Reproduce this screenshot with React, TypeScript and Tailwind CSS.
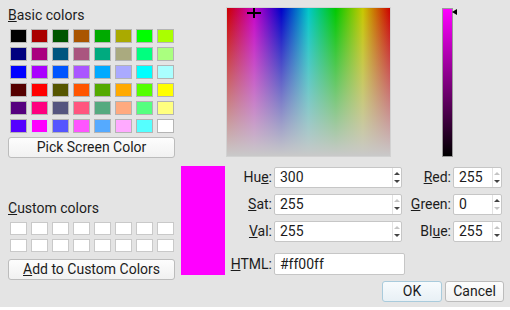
import React from "react";

const basicColors = [
  ["#000000", "#aa0000", "#005500", "#aa5500", "#00aa00", "#aaaa00", "#00ff00", "#aaff00"],
  ["#00007f", "#aa007f", "#00557f", "#aa557f", "#00aa7f", "#aaaa7f", "#00ff7f", "#aaff7f"],
  ["#0000ff", "#aa00ff", "#0055ff", "#aa55ff", "#00aaff", "#aaaaff", "#00ffff", "#aaffff"],
  ["#550000", "#ff0000", "#555500", "#ff5500", "#55aa00", "#ffaa00", "#55ff00", "#ffff00"],
  ["#55007f", "#ff007f", "#55557f", "#ff557f", "#55aa7f", "#ffaa7f", "#55ff7f", "#ffff7f"],
  ["#5500ff", "#ff00ff", "#5555ff", "#ff55ff", "#55aaff", "#ffaaff", "#55ffff", "#ffffff"],
];

function Arrow({ up, enabled }: { up: boolean; enabled: boolean }) {
  const color = enabled ? "border-b-[#444]" : "border-b-[#c4c4c4]";
  const colorDown = enabled ? "border-t-[#444]" : "border-t-[#c4c4c4]";
  return up ? (
    <div className={`w-0 h-0 border-x-[3px] border-x-transparent border-b-[3px] ${color}`} />
  ) : (
    <div className={`w-0 h-0 border-x-[3px] border-x-transparent border-t-[3px] ${colorDown}`} />
  );
}

function SpinBox({ value, w, up, down }: { value: string; w: string; up: boolean; down: boolean }) {
  return (
    <div className={`${w} h-[21px] flex bg-white border border-[#c6c6c6] rounded-[2px]`}>
      <div className="flex-1 pl-[5px] leading-[19px]">{value}</div>
      <div className="w-[9px] border-l border-[#e2e2e2] flex flex-col items-center justify-center gap-[5px]">
        <Arrow up enabled={up} />
        <Arrow up={false} enabled={down} />
      </div>
    </div>
  );
}

function Btn({ children, w, primary }: { children: React.ReactNode; w: string; primary?: boolean }) {
  return (
    <button
      className={`${w} h-[21px] rounded-[3px] border text-[14px] leading-[19px] ${
        primary
          ? "border-[#a9cbdc] bg-[linear-gradient(to_bottom,#f7fbfd,#e8f0f5)]"
          : "border-[#bcbcbc] bg-[linear-gradient(to_bottom,#fdfdfd,#f1f1f1)]"
      }`}
    >
      {children}
    </button>
  );
}

export default function App() {
  return (
    <div className="w-[510px] h-[307px] bg-[#e4e4e4] flex font-['Roboto','Noto_Sans',sans-serif] text-[14px] text-[#1c1c1c]">
      {/* left column */}
      <div className="w-[175px] pl-[8px] pt-[6px] flex flex-col">
        <div className="h-[18px] leading-[18px]">
          <span className="underline">B</span>asic colors
        </div>
        <div className="grid grid-cols-[repeat(8,17px)] gap-x-[4px] gap-y-[4px] mt-[5px] ml-[2px]">
          {basicColors.flat().map((c, i) => (
            <div
              key={i}
              className={`h-[14px] border ${i === 41 ? "border-[#cfe3ea]" : "border-[#b4b4b4]"}`}
              style={{ backgroundColor: c }}
            />
          ))}
        </div>
        <Btn w="w-[167px] mt-[4px]">Pick Screen Color</Btn>

        <div className="h-[16px] leading-[16px] mt-[42px]">
          <span className="underline">C</span>ustom colors
        </div>
        <div className="grid grid-cols-[repeat(8,17px)] gap-x-[4px] gap-y-[4px] mt-[6px] ml-[2px]">
          {Array.from({ length: 16 }).map((_, i) => (
            <div key={i} className="h-[13px] bg-white border border-[#c9c9c9]" />
          ))}
        </div>
        <Btn w="w-[167px] mt-[7px]">
          <span className="underline">A</span>dd to Custom Colors
        </Btn>
      </div>

      {/* right part */}
      <div className="flex-1 flex flex-col">
        <div className="flex pt-[7px] pl-[51px]">
          <div className="relative w-[165px] h-[150px] border border-[#d2d2d2] bg-[linear-gradient(to_right,#cc0000,#c800c8_16.67%,#0000c8_33.33%,#00c8c8_50%,#00c800_66.67%,#c8c800_83.33%,#cc0000)] overflow-hidden">
            <div className="absolute inset-0 bg-[linear-gradient(to_bottom,rgba(200,200,200,0),#c9c9c9)]" />
            <div className="absolute left-[20px] top-[4px] w-[14px] h-[2px] bg-black" />
            <div className="absolute left-[26px] top-0 w-[2px] h-[10px] bg-black" />
          </div>
          <div className="relative ml-[51px] mt-[1px] w-[11px] h-[149px] border border-[#9a9a9a] bg-[linear-gradient(to_bottom,#ff00ff,#000000)]">
            <div className="absolute left-full top-0 w-0 h-0 border-y-[3px] border-y-transparent border-r-[5px] border-r-black" />
          </div>
        </div>

        <div className="flex mt-[9px] ml-[6px]">
          <div className="w-[44px] h-[109px] bg-[#ff00ff]" />
          <div className="flex flex-col mt-[1px]">
            <div className="flex items-center">
              <div className="w-[49px] text-right pr-[2px]">
                Hu<span className="underline">e</span>:
              </div>
              <SpinBox value="300" w="w-[128px]" up down />
              <div className="w-[51px] text-right pr-[2px]">
                <span className="underline">R</span>ed:
              </div>
              <SpinBox value="255" w="w-[49px]" up={false} down />
            </div>
            <div className="flex items-center mt-[6px]">
              <div className="w-[49px] text-right pr-[2px]">
                <span className="underline">S</span>at:
              </div>
              <SpinBox value="255" w="w-[128px]" up={false} down />
              <div className="w-[51px] text-right pr-[2px]">
                <span className="underline">G</span>reen:
              </div>
              <SpinBox value="0" w="w-[49px]" up down={false} />
            </div>
            <div className="flex items-center mt-[6px]">
              <div className="w-[49px] text-right pr-[2px]">
                <span className="underline">V</span>al:
              </div>
              <SpinBox value="255" w="w-[128px]" up={false} down />
              <div className="w-[51px] text-right pr-[2px]">
                Bl<span className="underline">u</span>e:
              </div>
              <SpinBox value="255" w="w-[49px]" up={false} down />
            </div>
            <div className="flex items-center mt-[11px]">
              <div className="w-[49px] text-right pr-[2px]">
                <span className="underline">H</span>TML:
              </div>
              <div className="w-[131px] h-[22px] bg-white border border-[#c6c6c6] rounded-[2px] pl-[5px] leading-[20px]">
                #ff00ff
              </div>
            </div>
          </div>
        </div>

        <div className="flex justify-end gap-[3px] pr-[6px] mt-[6px]">
          <Btn w="w-[60px]" primary>
            OK
          </Btn>
          <Btn w="w-[59px]">Cancel</Btn>
        </div>
      </div>
    </div>
  );
}
